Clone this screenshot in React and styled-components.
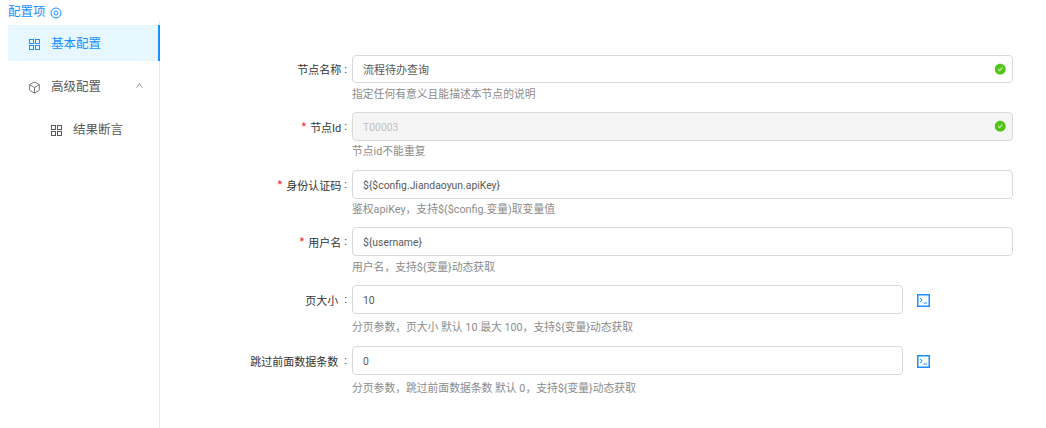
import React from 'react';
import styled, { createGlobalStyle } from 'styled-components';
import { AiFillCheckCircle, AiOutlineUp } from 'react-icons/ai';
import { Box } from 'lucide-react';

const GlobalStyle = createGlobalStyle`
  html, body {
    margin: 0;
    padding: 0;
    background: #fff;
    font-family: Roboto, "Noto Sans CJK SC", sans-serif;
  }
`;

const Page = styled.div`
  width: 1046px;
  height: 428px;
  overflow: hidden;
  display: flex;
  flex-direction: column;
  box-sizing: border-box;
`;

const Title = styled.div`
  display: flex;
  align-items: center;
  gap: 4px;
  height: 20px;
  padding-left: 8px;
  font-size: 12.5px;
  color: #1890ff;

  svg {
    margin-top: 5px;
  }
`;

const Body = styled.div`
  flex: 1;
  display: flex;
`;

const Sidebar = styled.nav`
  width: 160px;
  box-sizing: border-box;
  margin-top: 1px;
  padding: 4px 0 0 8px;
  border-right: 1px solid #e8e8e8;
`;

const MenuItem = styled.div`
  height: 36px;
  box-sizing: border-box;
  padding-bottom: 2px;
  margin-bottom: ${p => p.$gap || 0}px;
  display: flex;
  align-items: center;
  gap: 11px;
  padding-left: ${p => (p.$nested ? 43 : 21)}px;
  font-size: 12.5px;
  color: ${p => (p.$active ? '#1890ff' : '#595959')};
  background: ${p => (p.$active ? '#e6f7ff' : 'transparent')};
  border-right: 2px solid ${p => (p.$active ? '#1890ff' : 'transparent')};
  margin-right: -1px;

  > svg {
    margin-top: 5px;
    flex: none;
  }

  > svg.lucide {
    margin-left: -1px;
    margin-right: -1px;
  }
`;

const Caret = styled.span`
  margin-left: auto;
  margin-right: 14px;
  display: flex;
  color: #8c8c8c;

  svg {
    font-size: 9px;
  }
`;

const Form = styled.main`
  flex: 1;
  padding: 35px 33px 0 0;
`;

const Row = styled.div`
  display: grid;
  grid-template-columns: 192px 1fr;
  margin-bottom: ${p => p.$mb}px;
`;

const Label = styled.label`
  height: ${p => p.$h || 29}px;
  padding-right: 5px;
  display: flex;
  align-items: center;
  justify-content: flex-end;
  font-size: 11px;
  color: #333;
  white-space: nowrap;
`;

const Star = styled.span`
  color: #f5222d;
  margin-right: 4px;
`;

const Colon = styled.span`
  margin-left: ${p => (p.$wide ? 6 : 3)}px;
`;

const Control = styled.div`
  display: flex;
  align-items: center;
  gap: 14px;
`;

const InputBox = styled.div`
  width: ${p => (p.$short ? '551px' : '100%')};
  height: ${p => p.$h || 29}px;
  box-sizing: border-box;
  display: flex;
  align-items: center;
  justify-content: space-between;
  padding: 0 6px 0 10px;
  border: 1px solid #d9d9d9;
  border-radius: 4px;
  font-size: ${p => (p.$latin ? 10.4 : 11)}px;
  color: ${p => (p.$disabled ? '#bfbfbf' : '#595959')};
  background: ${p => (p.$disabled ? '#f5f5f5' : '#fff')};

  svg {
    font-size: 12.5px;
    color: #52c41a;
  }
`;

const ValueText = styled.span`
  margin-top: ${p => (p.$latin ? 2 : 0)}px;
`;

const CodeButton = styled.span`
  display: flex;
  margin-top: 2px;
`;

const Hint = styled.div`
  margin-top: ${p => p.$mt}px;
  font-size: 10.8px;
  line-height: 15px;
  color: #8c8c8c;
  white-space: nowrap;
`;

const GridIcon = () => (
  <svg width="11" height="11" viewBox="0 0 11 11" fill="none" stroke="currentColor">
    <rect x="0.5" y="0.5" width="4" height="4" />
    <rect x="6.5" y="0.5" width="4" height="4" />
    <rect x="0.5" y="6.5" width="4" height="4" />
    <rect x="6.5" y="6.5" width="4" height="4" />
  </svg>
);

const TerminalIcon = () => (
  <svg width="13" height="13" viewBox="0 0 13 13" fill="none" stroke="#1890ff">
    <rect x="0.75" y="0.75" width="11.5" height="11.5" strokeWidth="1.5" />
    <path d="M3 4l2.2 2L3 8M6.5 9h3.5" strokeWidth="1" />
  </svg>
);

const fields = [
  { label: '节点名称', value: '流程待办查询', hint: '指定任何有意义且能描述本节点的说明', ok: true, h: 28, mt: 4, mb: 10 },
  { label: '节点Id', value: 'T00003', latin: true, hint: '节点id不能重复', ok: true, required: true, disabled: true, mt: 3, mb: 11 },
  { label: '身份认证码', value: '${$config.Jiandaoyun.apiKey}', latin: true, hint: '鉴权apiKey，支持$($config.变量)取变量值', required: true, mt: 3, mb: 10 },
  { label: '用户名', value: '${username}', latin: true, hint: '用户名，支持${变量}动态获取', required: true, mt: 4, mb: 10 },
  { label: '页大小', value: '10', latin: true, hint: '分页参数，页大小 默认 10 最大 100，支持${变量}动态获取', code: true, mt: 6, mb: 11 },
  { label: '跳过前面数据条数', value: '0', latin: true, hint: '分页参数，跳过前面数据条数 默认 0，支持${变量}动态获取', code: true, mt: 6, mb: 0 },
];

const App = () => (
  <Page>
    <GlobalStyle />
    <Title>
      配置项
      <svg width="12" height="12" viewBox="0 0 12 12" fill="none" stroke="#1890ff">
        <circle cx="6" cy="6" r="5" />
        <circle cx="6" cy="6" r="2" />
      </svg>
    </Title>
    <Body>
      <Sidebar>
        <MenuItem $active $gap={7}><GridIcon />基本配置</MenuItem>
        <MenuItem $gap={7}>
          <Box size={13} strokeWidth={1.5} />高级配置
          <Caret><AiOutlineUp /></Caret>
        </MenuItem>
        <MenuItem $nested><GridIcon />结果断言</MenuItem>
      </Sidebar>
      <Form>
        {fields.map(f => (
          <Row key={f.label} $mb={f.mb}>
            <Label $h={f.h}>
              {f.required && <Star>*</Star>}
              {f.label}
              <Colon $wide={f.code}>:</Colon>
            </Label>
            <div>
              <Control>
                <InputBox $short={f.code} $disabled={f.disabled} $h={f.h} $latin={f.latin}>
                  <ValueText $latin={f.latin}>{f.value}</ValueText>
                  {f.ok && <AiFillCheckCircle />}
                </InputBox>
                {f.code && <CodeButton><TerminalIcon /></CodeButton>}
              </Control>
              <Hint $mt={f.mt}>{f.hint}</Hint>
            </div>
          </Row>
        ))}
      </Form>
    </Body>
  </Page>
);

export default App;
